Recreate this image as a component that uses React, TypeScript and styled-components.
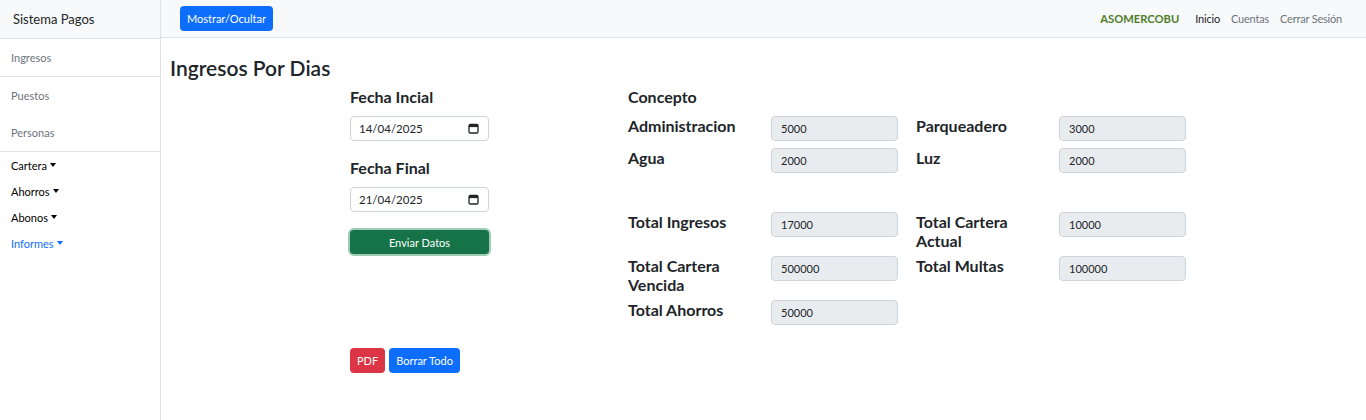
import React from "react";
import styled, { createGlobalStyle } from "styled-components";

const Global = createGlobalStyle`
  html, body { margin: 0; padding: 0; background: #fff; }
  body { font-family: "Lato", "Noto Sans", "Liberation Sans", sans-serif; color: #212529; }
  * { box-sizing: border-box; }
`;

const Layout = styled.div`
  display: flex;
  width: 1366px;
  height: 420px;
`;

const Sidebar = styled.aside`
  width: 161px;
  flex: none;
  border-right: 1px solid #dee2e6;
  display: flex;
  flex-direction: column;
`;

const Brand = styled.div`
  height: 39px;
  background: #f8f9fa;
  border-bottom: 1px solid #dee2e6;
  display: flex;
  align-items: center;
  padding-left: 13px;
  font-size: 13px;
  color: #212529;
`;

const NavLink = styled.div<{ $h: number; $border?: boolean }>`
  height: ${(p) => p.$h}px;
  display: flex;
  align-items: center;
  padding-left: 11px;
  font-size: 11px;
  color: #6c757d;
  border-bottom: ${(p) => (p.$border ? "1px solid #dee2e6" : "none")};
`;

const Dropdown = styled.div<{ $blue?: boolean }>`
  height: 26px;
  display: flex;
  align-items: center;
  padding-left: 11px;
  font-size: 11px;
  color: ${(p) => (p.$blue ? "#0d6efd" : "#000")};
  &::after {
    content: "";
    margin-left: 3px;
    border-top: 4px solid currentColor;
    border-left: 3.5px solid transparent;
    border-right: 3.5px solid transparent;
  }
`;

const DropList = styled.div``;

const Main = styled.main`
  flex: 1;
  display: flex;
  flex-direction: column;
`;

const TopBar = styled.header`
  height: 38px;
  background: #f8f9fa;
  border-bottom: 1px solid #dee2e6;
  display: flex;
  align-items: center;
  padding: 0 24px 0 19px;
`;

const Btn = styled.button<{ $variant: "primary" | "danger" | "success" }>`
  font-family: inherit;
  font-size: 11px;
  color: #fff;
  border: none;
  border-radius: 4px;
  height: 25px;
  padding: 0 7px;
  cursor: pointer;
  background: ${(p) =>
    p.$variant === "primary" ? "#0d6efd" : p.$variant === "danger" ? "#dc3545" : "#157347"};
`;

const Spacer = styled.div`
  flex: 1;
`;

const TopLinks = styled.nav`
  display: flex;
  align-items: center;
  gap: 11px;
  font-size: 11px;
  letter-spacing: -0.2px;
`;

const BrandName = styled.span`
  color: #4c7d2a;
  font-weight: 700;
  font-size: 11.2px;
  letter-spacing: 0;
  margin-right: 5px;
`;

const TopLink = styled.span<{ $active?: boolean }>`
  color: ${(p) => (p.$active ? "#212529" : "#6c757d")};
`;

const Content = styled.div`
  padding: 17px 10px 0 9px;
`;

const Title = styled.h1`
  margin: 0;
  font-size: 21px;
  line-height: 25px;
  font-weight: 600;
`;

const Row = styled.div`
  display: flex;
  margin-top: 7px;
  padding-left: 180px;
`;

const FormCol = styled.div`
  width: 139px;
  display: flex;
  flex-direction: column;
`;

const FieldLabel = styled.div<{ $mt?: number }>`
  font-size: 16px;
  line-height: 20px;
  font-weight: 700;
  color: #212529;
  margin-top: ${(p) => p.$mt ?? 0}px;
`;

const DateField = styled.div`
  margin-top: 9px;
  height: 25px;
  border: 1px solid #ced4da;
  border-radius: 4px;
  background: #fff;
  display: flex;
  align-items: center;
  justify-content: space-between;
  padding: 0 9px 0 8px;
  font-size: 11.5px;
  color: #212529;
`;

const SubmitBtn = styled(Btn)`
  margin-top: 18px;
  width: 139px;
  height: 24px;
  box-shadow: 0 0 0 2px rgba(60, 153, 110, 0.5);
`;

const Concept = styled.section`
  margin-left: 139px;
  display: flex;
  flex-direction: column;
`;

const Grid = styled.div<{ $rowGap: number; $mt: number }>`
  display: grid;
  grid-template-columns: 143px 145px 143px 127px;
  row-gap: ${(p) => p.$rowGap}px;
  margin-top: ${(p) => p.$mt}px;
  align-items: start;
`;

const CellLabel = styled.div`
  font-size: 16px;
  line-height: 19px;
  font-weight: 700;
  max-width: 128px;
`;

const ValueBox = styled.div`
  width: 127px;
  height: 25px;
  background: #e9ecef;
  border: 1px solid #ced4da;
  border-radius: 4px;
  display: flex;
  align-items: center;
  padding-left: 9px;
  font-size: 11px;
  color: #212529;
`;

const Actions = styled.div`
  display: flex;
  gap: 4px;
  margin-top: 23px;
  padding-left: 180px;
`;

const CalendarIcon = () => (
  <svg width="11" height="11" viewBox="0 0 11 11" aria-hidden="true">
    <rect x="1" y="1.5" width="9" height="8.5" rx="1.3" fill="none" stroke="#212529" strokeWidth="1.3" />
    <rect x="1" y="1.5" width="9" height="2.6" fill="#212529" />
  </svg>
);

const DateInput = ({ value }: { value: string }) => (
  <DateField>
    <span>{value}</span>
    <CalendarIcon />
  </DateField>
);

const Item = ({ label, value }: { label: string; value: string }) => (
  <>
    <CellLabel>{label}</CellLabel>
    <ValueBox>{value}</ValueBox>
  </>
);

export default function App() {
  return (
    <>
      <Global />
      <Layout>
        <Sidebar>
          <Brand>Sistema Pagos</Brand>
          <NavLink $h={38} $border>Ingresos</NavLink>
          <NavLink $h={37}>Puestos</NavLink>
          <NavLink $h={38} $border>Personas</NavLink>
          <DropList>
            <Dropdown>Cartera</Dropdown>
            <Dropdown>Ahorros</Dropdown>
            <Dropdown>Abonos</Dropdown>
            <Dropdown $blue>Informes</Dropdown>
          </DropList>
        </Sidebar>
        <Main>
          <TopBar>
            <Btn $variant="primary">Mostrar/Ocultar</Btn>
            <Spacer />
            <TopLinks>
              <BrandName>ASOMERCOBU</BrandName>
              <TopLink $active>Inicio</TopLink>
              <TopLink>Cuentas</TopLink>
              <TopLink>Cerrar Sesión</TopLink>
            </TopLinks>
          </TopBar>
          <Content>
            <Title>Ingresos Por Dias</Title>
            <Row>
              <FormCol>
                <FieldLabel>Fecha Incial</FieldLabel>
                <DateInput value="14/04/2025" />
                <FieldLabel $mt={17}>Fecha Final</FieldLabel>
                <DateInput value="21/04/2025" />
                <SubmitBtn $variant="success">Enviar Datos</SubmitBtn>
              </FormCol>
              <Concept>
                <FieldLabel>Concepto</FieldLabel>
                <Grid $rowGap={7} $mt={9}>
                  <Item label="Administracion" value="5000" />
                  <Item label="Parqueadero" value="3000" />
                  <Item label="Agua" value="2000" />
                  <Item label="Luz" value="2000" />
                </Grid>
                <Grid $rowGap={6} $mt={39}>
                  <Item label="Total Ingresos" value="17000" />
                  <Item label="Total Cartera Actual" value="10000" />
                  <Item label="Total Cartera Vencida" value="500000" />
                  <Item label="Total Multas" value="100000" />
                  <Item label="Total Ahorros" value="50000" />
                </Grid>
              </Concept>
            </Row>
            <Actions>
              <Btn $variant="danger">PDF</Btn>
              <Btn $variant="primary">Borrar Todo</Btn>
            </Actions>
          </Content>
        </Main>
      </Layout>
    </>
  );
}
